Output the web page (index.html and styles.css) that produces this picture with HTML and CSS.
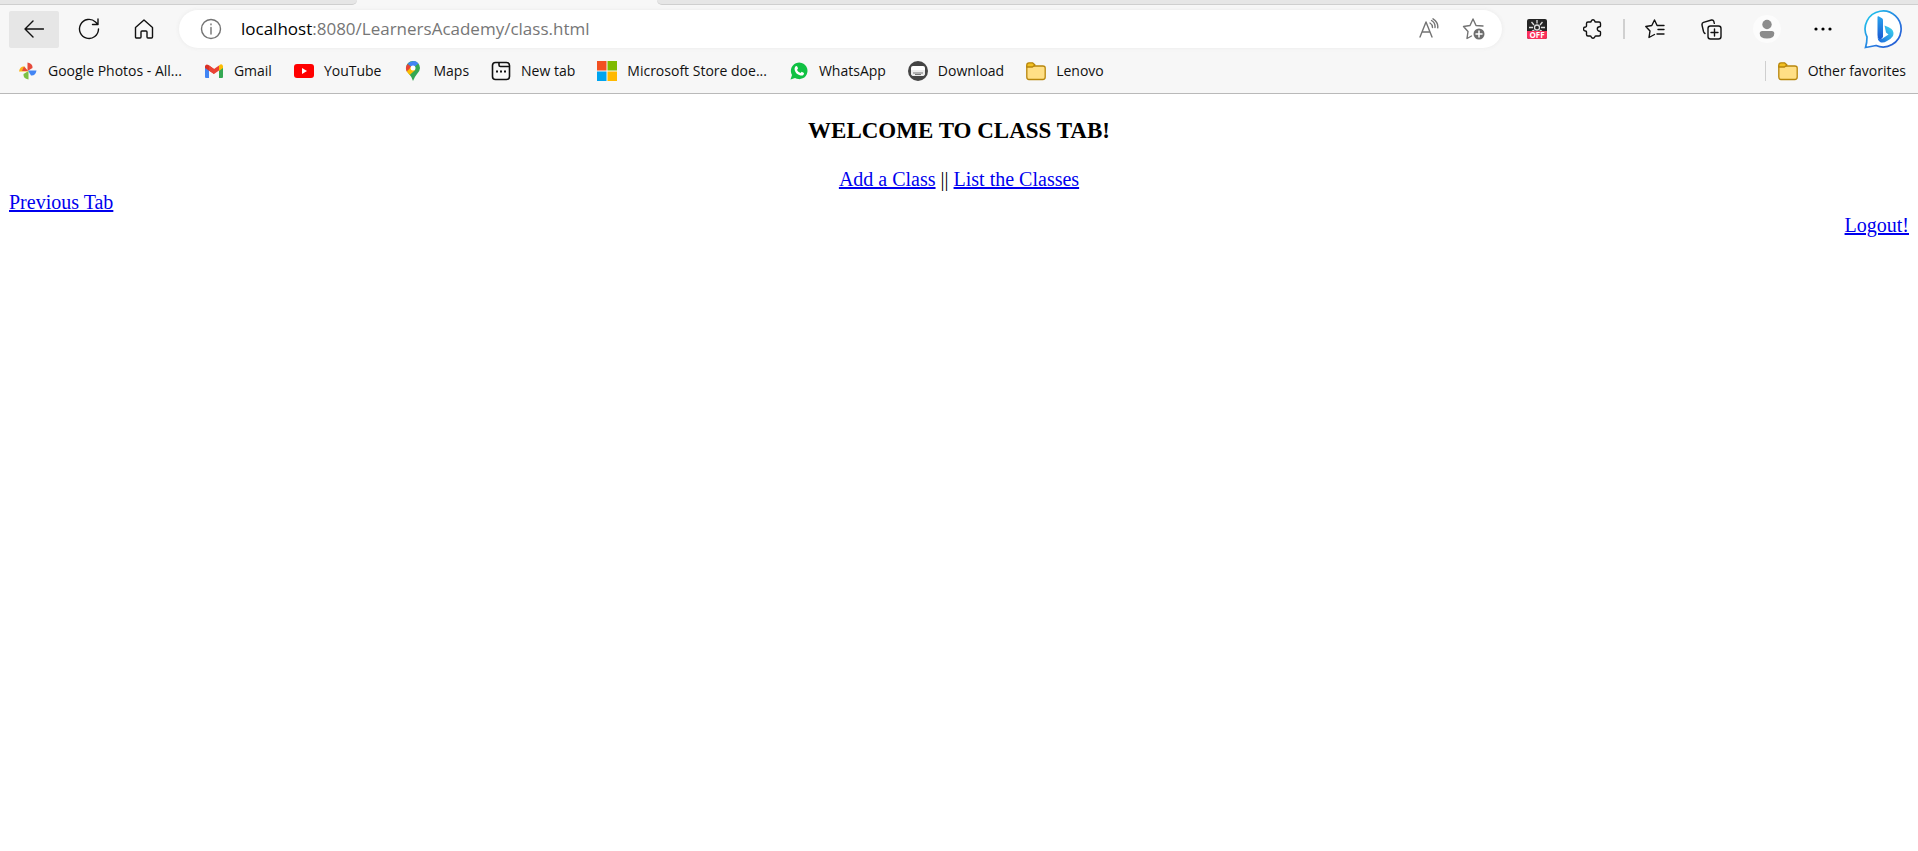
FILE: index.html
```html
<!DOCTYPE html>
<html lang="en">
<head>
<meta charset="utf-8">
<title>Class Tab</title>
<link rel="stylesheet" href="styles.css">
</head>
<body>
<header class="browser">
  <div class="tabstrip"><span class="tab-left"></span><span class="tab-active"></span><span class="tab-right"></span></div>
  <div class="toolbar">
    <button class="tool tool-hover" aria-label="Back"><svg width="20" height="20" viewBox="0 0 20 20" class="line"><path d="M19.500 10H1M9 2 1 10l8 8"/></svg></button>
    <button class="tool" aria-label="Refresh"><svg width="22" height="22" viewBox="0 0 22 22" class="line"><path d="M20.500 11a9.500 9.500 0 1 1-3-7l2.500 2.500M20 1v5.500h-5.500"/></svg></button>
    <button class="tool" aria-label="Home"><svg width="20" height="20" viewBox="0 0 20 20" class="line"><path d="M1.500 8.500 10 1l8.500 7.500V18a1 1 0 0 1-1 1H14a1 1 0 0 1-1-1v-5a1 1 0 0 0-1-1H8a1 1 0 0 0-1 1v5a1 1 0 0 1-1 1H2.500a1 1 0 0 1-1-1z"/></svg></button>
    <div class="address">
      <button class="info" aria-label="Site information"><svg width="22" height="22" viewBox="0 0 22 22" class="line grey"><circle cx="11" cy="11" r="9.500"/><path d="M11 9.500V16M11 6v.8"/></svg></button>
      <a class="url" href="#"><span class="host">localhost</span>:8080/LearnersAcademy/class.html</a>
      <button class="mini" aria-label="Read aloud"><svg width="22" height="22" viewBox="0 0 22 22" class="line grey"><path d="M2 19 8 4l6 15M4 14h8M12 5q2.500 1.500 2.500 4.500M13.500 2.500q4 2.500 3.500 7M15 .8q5.500 3.500 4.700 9"/></svg></button>
      <button class="mini" aria-label="Add to favorites"><svg width="24" height="24" viewBox="0 0 24 24" class="line grey"><path d="M9.500 19 5 21.500l1-7L1.500 9.500l6.500-1L11 2l3 6.500 7 .5"/><circle cx="17" cy="17" r="5.500" fill="#6e6e6e" stroke="none"/><path d="M17 14v6M14 17h6" stroke="#fff" stroke-width="1.500"/></svg></button>
    </div>
    <div class="actions">
      <button class="tool" aria-label="Brightness extension off"><span class="ext"><svg width="20" height="12" viewBox="0 0 20 12"><g fill="none" stroke="#ddd" stroke-width="1.300"><circle cx="10" cy="8.500" r="2.500"/><path d="M10 4.500V1M7 6 4.500 3M13 6l2.500-3M6 8.500H2M14 8.500h4M7.500 11 5 12M12.500 11l2.500 1"/></g></svg><span class="off">OFF</span></span></button>
      <button class="tool" aria-label="Extensions"><svg width="20" height="20" viewBox="0 0 20 20" class="line"><path d="M5 3h2.300q.8 0 1-1a1.800 1.800 0 0 1 3.400 0q.2 1 1 1H16q1.500 0 1.500 1.500V7q0 .8-1 .8a2.200 2.200 0 0 0 0 4.400q1 0 1 .8v2.500Q17.500 17 16 17h-3.300q-.8 0-1 1a1.800 1.800 0 0 1-3.400 0q-.2-1-1-1H5q-1.500 0-1.500-1.500V13q0-.8-1-1a2 2 0 0 1 0-4q1-.2 1-1V4.500Q3.500 3 5 3z"/></svg></button>
      <span class="separator"></span>
      <button class="tool" aria-label="Favorites"><svg width="20" height="20" viewBox="0 0 20 20" class="line"><path d="M9.500 15.500 4 18.500l1-6.500L.8 7.500l6-1L9.500 1l2.600 5.500H19M13 10.500h6M12 15h7"/></svg></button>
      <button class="tool" aria-label="Collections"><svg width="21" height="21" viewBox="0 0 21 21" class="line"><rect x="7" y="7" width="13" height="13" rx="2.500"/><path d="M13.500 10v7M10 13.500h7M4 14.500Q3 14 2.500 12.500L1 6Q.7 4 2.500 3.300L10.500 1q1.800-.3 2.300 1.300l.5 2"/></svg></button>
      <button class="tool" aria-label="Profile"><svg width="30" height="30" viewBox="0 0 30 30"><circle cx="15" cy="15" r="14" fill="#fcfcfc"/><g fill="#8c8c8c"><circle cx="15" cy="10.500" r="4.700"/><path d="M7.700 19.500q0-2.500 2.500-2.500h9.600q2.500 0 2.500 2.500 0 5-7.300 5t-7.300-5"/></g></svg></button>
      <button class="tool" aria-label="Settings and more"><svg width="18" height="4" viewBox="0 0 18 4"><circle cx="2" cy="2" r="1.600"/><circle cx="9" cy="2" r="1.600"/><circle cx="16" cy="2" r="1.600"/></svg></button>
      <button class="tool tool-wide" aria-label="Bing"><svg width="40" height="40" viewBox="0 0 40 40"><defs><linearGradient id="ring" x2="1" y2="1"><stop stop-color="#20d0ee"/><stop offset=".6" stop-color="#2878df"/><stop offset="1" stop-color="#2454d0"/></linearGradient><linearGradient id="bee" x1="0" y1="1" x2="1" y2="0"><stop stop-color="#1b65dc"/><stop offset="1" stop-color="#3fdcf0"/></linearGradient><linearGradient id="stem" x2="0" y2="1"><stop stop-color="#2aa5ee"/><stop offset="1" stop-color="#1a56d0"/></linearGradient></defs><path d="M1.500 38.500Q3 34 3 28A18 18 0 1 1 12 36.500Q7 37.500 1.500 38.500z" fill="#fff" stroke="url(#ring)" stroke-width="1.700"/><path d="M13.500 8q0-1 1-.7l3.500 2q1 .7 1 2V28l-2.500 3q-3-1-3-5z" fill="url(#stem)"/><path d="M20.500 16.500q5 1.500 7 3.500 3 3 1.500 7-2 3-6 5-4 2.500-7 1-2.500-1.500-2.500-5 2 3.500 5 1.500l6-4-2.500-2z" fill="url(#bee)"/></svg></button>
    </div>
  </div>
  <nav class="bookmarks" aria-label="Bookmarks">
    <a href="#"><svg width="20" height="20" viewBox="0 0 20 20"><path d="M9.500 10V1.500q5.500 1 5 5.500z" fill="#e64a3b"/><path d="M10 9.500h8.500q-1 5.500-5.500 5z" fill="#4285f4"/><path d="M10.500 10v8.500q-5.500-1-5-5.500z" fill="#7cc143"/><path d="M10 10.500H1q1-5.500 5.500-5z" fill="#fbb41a"/><path d="M6 5.500 10 10H4z" fill="#e64a3b"/></svg><span>Google Photos - All...</span></a>
    <a href="#"><svg width="20" height="20" viewBox="0 0 20 20"><path d="M1 6v10q0 1 1 1h3V9z" fill="#4285f4"/><path d="M19 6v10q0 1-1 1h-3V9z" fill="#34a853"/><path d="M1 5q1-2.500 3.500-1L10 8v5L1 7z" fill="#d93025"/><path d="M5 4.500 10 8l5-3.500v5L10 13 5 9.500z" fill="#ea4335"/><path d="m15 4.500q3-2.500 4 .5v2l-4 3z" fill="#fbbc04"/></svg><span>Gmail</span></a>
    <a href="#"><svg width="20" height="20" viewBox="0 0 20 20"><rect y="3" width="20" height="14" rx="3" fill="#f00"/><path d="m8 7 5 3-5 3z" fill="#fff"/></svg><span>YouTube</span></a>
    <a href="#"><svg width="20" height="20" viewBox="0 0 20 20"><path d="M3 7a7 7 0 0 1 14 0q0 3-3 6-2.500 3-4 7-1-4-4-7-3-3-3-6" fill="#34a853"/><path d="M4.500 3a7 7 0 0 1 11-.4L10 7z" fill="#4285f4"/><path d="m4.500 3 4 3L4 11Q1.500 7 4.500 3" fill="#ea4335"/><path d="m3.700 10.500 5-5 3.500 3.500-5.500 5z" fill="#fbbc04"/><circle cx="10" cy="7" r="2.500" fill="#fff"/></svg><span>Maps</span></a>
    <a href="#"><svg width="20" height="20" viewBox="0 0 20 20" class="line"><rect x="1.500" y="1.500" width="17" height="17" rx="3" stroke-width="1.600"/><path d="M8 2v2q0 1.500 1.500 1.500H18" stroke-width="1.600"/><path class="dots" d="M5 10.500h2M9 10.500h2M13 10.500h2"/></svg><span>New tab</span></a>
    <a href="#"><svg width="20" height="20" viewBox="0 0 20 20"><path d="M0 0h9.500v9.500H0z" fill="#f25022"/><path d="M10.500 0H20v9.500h-9.500z" fill="#7fba00"/><path d="M0 10.500h9.500V20H0z" fill="#00a4ef"/><path d="M10.500 10.500H20V20h-9.500z" fill="#ffb900"/></svg><span>Microsoft Store doe...</span></a>
    <a href="#"><svg width="20" height="20" viewBox="0 0 20 20"><path d="M1.500 18.500 3 14a8.300 8.300 0 1 1 3 3z" fill="#10c143"/><path d="M6 6q1.500-2 2.500 0l.5 1.500-1 1.500q1 2 3.500 3l1.200-1.300 2.300 1.300q0 3-3.500 2.500Q6 13 5.500 8z" fill="#fff"/></svg><span>WhatsApp</span></a>
    <a href="#"><svg width="20" height="20" viewBox="0 0 20 20"><circle cx="10" cy="10" r="10" fill="#454545"/><path d="M5 5h10q2 0 2 2v5q0 3-3 3H6q-3 0-3-3V7q0-2 2-2" fill="#fff"/><path d="M3 9h14v3q0 3-3 3H6q-3 0-3-3z" fill="#ececec"/><path d="M5 12h10M7 13.500h6" stroke="#777"/></svg><span>Download</span></a>
    <a href="#"><svg width="20" height="20" viewBox="0 0 20 20" class="folder"><path d="M.8 5h16q2.400 0 2.400 2v9q0 2.500-2.400 2.500H3Q.8 18.500.8 16z" fill="#ffdf85"/><path d="M.8 6V4Q.8 1.800 3 1.800h3.500L9 4 6.500 6z" fill="#f2c022"/></svg><span>Lenovo</span></a>
    <a href="#" class="other"><svg width="20" height="20" viewBox="0 0 20 20" class="folder"><path d="M.8 5h16q2.400 0 2.400 2v9q0 2.500-2.400 2.500H3Q.8 18.500.8 16z" fill="#ffdf85"/><path d="M.8 6V4Q.8 1.800 3 1.800h3.500L9 4 6.500 6z" fill="#f2c022"/></svg><span>Other favorites</span></a>
  </nav>
</header>
<main class="page">
  <h3 class="title">WELCOME TO CLASS TAB!</h3>
  <div class="center"><a href="#">Add a Class</a> || <a href="#">List the Classes</a></div>
  <div><a href="#">Previous Tab</a></div>
  <div class="right"><a href="#">Logout!</a></div>
</main>
</body>
</html>
```
FILE: styles.css
```css
* { box-sizing: border-box; }
body { margin: 0; background: #fff; color: #000; }
svg { display: block; flex: none; }
button { border: 0; padding: 0; background: none; display: flex; align-items: center; justify-content: center; }

.browser { background: #f7f7f7; border-bottom: 1px solid #b9b9b9; font-family: "Segoe UI", "Open Sans", sans-serif; }
.tabstrip { display: flex; height: 5px; background: #f7f7f7; }
.tab-left, .tab-right { background: #e6e6e6; border-bottom: 1px solid #cfcfcf; }
.tab-left { width: 357px; border-bottom-right-radius: 5px; }
.tab-active { width: 300px; }
.tab-right { flex: 1; border-bottom-left-radius: 5px; }

.toolbar { display: flex; align-items: center; gap: 5px; padding: 5px 4px 0 9px; }
.tool { width: 50px; height: 37px; border-radius: 2px; }
.tool-wide { width: 60px; }
.tool-hover { background: #e6e6e6; }
.line { fill: none; stroke: #111; stroke-width: 1.4px; stroke-linecap: round; stroke-linejoin: round; }
.grey { stroke: #737373; }
.dots { stroke-width: 2px; stroke-linecap: butt; }
.address { flex: 1; display: flex; align-items: center; height: 38px; margin: 0 5px; padding: 0 16px 0 21px; border-radius: 19px; background: #fff; box-shadow: 0 0 4px #e9e9e9; }
.url { flex: 1; margin-left: 19px; color: #767676; font-size: 17px; line-height: 24px; text-decoration: none; }
.host { color: #000; }
.mini { width: 24px; margin-left: 21px; }
.actions { display: flex; align-items: center; gap: 6px; }
.separator { width: 2px; height: 20px; margin: 0 -1px; background: #d0d0d0; }
.ext { display: flex; flex-direction: column; width: 20px; height: 20px; border-radius: 2px; background: #252525; }
.off { height: 8px; border-radius: 0 0 2px 2px; background: #fa2f5b; color: #fff; font: bold 8px/8px "Open Sans", sans-serif; text-align: center; }

.bookmarks { display: flex; align-items: center; gap: 22px; height: 45px; padding: 0 12px 0 18px; }
.bookmarks a { display: flex; align-items: center; gap: 10px; color: #111; font-size: 14px; line-height: 20px; text-decoration: none; white-space: nowrap; }
.bookmarks .other { margin-left: auto; padding-left: 12px; border-left: 1px solid #cfcfcf; }
.folder { stroke: #b8860b; stroke-width: 1.3px; stroke-linejoin: round; }

.page { padding: 0 9px; font: 20px/23px "Liberation Serif", serif; }
.page a { color: #0000ee; }
.title { margin: 23px 0; font-size: 23px; line-height: 28px; text-align: center; }
.center { text-align: center; }
.right { text-align: right; }
```
